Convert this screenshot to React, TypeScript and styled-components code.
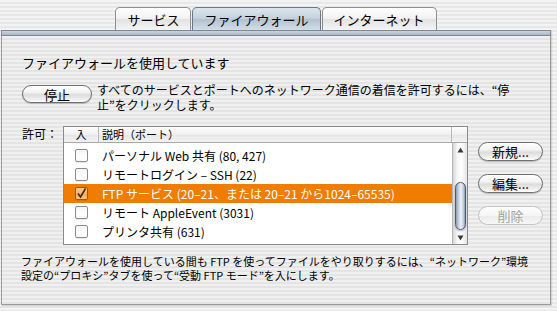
import React from 'react';
import styled, { createGlobalStyle, css } from 'styled-components';

const stripes = (a: string, b: string) =>
  `repeating-linear-gradient(to bottom, ${a} 0px, ${a} 2px, ${b} 2px, ${b} 4px)`;

const Global = createGlobalStyle`
  html, body { margin: 0; padding: 0; }
  body {
    width: 557px;
    height: 311px;
    overflow: hidden;
    background: ${stripes('#f3f3f3', '#e7e7e7')};
    font-family: "Noto Sans CJK JP", "Noto Sans", sans-serif;
    color: #000;
  }
`;

const Window = styled.div`
  padding: 7px 6px 0 1px;
  display: flex;
  flex-direction: column;
`;

const TabBar = styled.div`
  display: flex;
  justify-content: center;
  gap: 1px;
  height: 23px;
`;

const Tab = styled.div<{ $active?: boolean }>`
  height: 22px;
  padding: 0 11px;
  display: flex;
  align-items: center;
  font-size: 13px;
  border: 1px solid #8e8e8e;
  border-bottom: none;
  border-radius: 5px 5px 0 0;
  background: linear-gradient(to bottom, #fefefe 0%, #f1f1f1 48%, #e2e2e2 52%, #f4f4f4 100%);
  ${(p) =>
    p.$active &&
    css`
      border-color: #6c7886;
      background: linear-gradient(to bottom, #dde5ec 0%, #c3d0dc 48%, #b3c2d1 52%, #d2dce6 100%);
    `}
`;

const Panel = styled.div`
  display: flex;
  flex-direction: column;
  height: 275px;
  box-shadow: 1px 1px 1px rgba(0, 0, 0, 0.12);
`;

const PanelHead = styled.div`
  height: 4px;
  border: 1px solid #7d8997;
  background: linear-gradient(to bottom, #c9d3dd, #aab7c5);
`;

const PanelBody = styled.div`
  flex: 1;
  border: 1px solid #9b9b9b;
  border-top: none;
  background: ${stripes('#f0f0f0', '#e4e4e4')};
  padding: 19px 0 0 20px;
  display: flex;
  flex-direction: column;
`;

const Title = styled.div`
  font-size: 13px;
  line-height: 16px;
`;

const StopRow = styled.div`
  display: flex;
  align-items: flex-start;
  gap: 5px;
  margin-top: 14px;
`;

const AquaButton = styled.div<{ $w: number; $disabled?: boolean }>`
  width: ${(p) => p.$w}px;
  height: 18px;
  box-sizing: border-box;
  border: 1px solid #707070;
  border-radius: 10px;
  display: flex;
  align-items: center;
  justify-content: center;
  font-size: 13px;
  background: linear-gradient(to bottom, #ffffff 0%, #f3f3f3 40%, #dcdcdc 55%, #f0f0f0 85%, #ffffff 100%);
  box-shadow: 0 1px 1px rgba(0, 0, 0, 0.22);
  flex: none;
  ${(p) =>
    p.$disabled &&
    css`
      border-color: #c2c2c2;
      color: #a2a2a2;
      box-shadow: none;
      background: linear-gradient(to bottom, #fcfcfc 0%, #f6f6f6 50%, #ececec 55%, #f7f7f7 100%);
    `}
`;

const Description = styled.div`
  font-size: 12px;
  line-height: 15px;
  margin-top: -3px;
`;

const AllowRow = styled.div`
  display: flex;
  align-items: flex-start;
  margin-top: 14px;
`;

const AllowLabel = styled.div`
  font-size: 12px;
  line-height: 16px;
  width: 41px;
  white-space: nowrap;
  flex: none;
`;

const Table = styled.div`
  width: 405px;
  height: 119px;
  box-sizing: border-box;
  border: 1px solid #8a8a8a;
  background: #fff;
  display: flex;
  flex-direction: column;
`;

const HeaderRow = styled.div`
  display: flex;
  height: 15px;
  border-bottom: 1px solid #a8a8a8;
  background: linear-gradient(to bottom, #ffffff, #efefef 50%, #e6e6e6 51%, #f2f2f2);
  font-size: 11px;
  line-height: 15px;
`;

const HeadCell = styled.div<{ $w?: number; $center?: boolean }>`
  ${(p) => (p.$w ? `width: ${p.$w}px; flex: none;` : 'flex: 1;')}
  box-sizing: border-box;
  border-right: 1px solid #b8b8b8;
  padding-left: ${(p) => (p.$center ? 0 : 3)}px;
  text-align: ${(p) => (p.$center ? 'center' : 'left')};
  &:last-child { border-right: none; }
`;

const Body = styled.div`
  flex: 1;
  display: flex;
  min-height: 0;
`;

const RowList = styled.div`
  flex: 1;
  padding-top: 3px;
  overflow: hidden;
`;

const Row = styled.div<{ $selected?: boolean }>`
  display: flex;
  align-items: center;
  height: 19px;
  font-size: 12px;
  background: ${(p) => (p.$selected ? '#f07c00' : 'transparent')};
  color: ${(p) => (p.$selected ? '#fff' : '#000')};
`;

const CheckCell = styled.div`
  width: 35px;
  flex: none;
  display: flex;
  justify-content: center;
`;

const Check = styled.div<{ $checked?: boolean }>`
  width: 13px;
  height: 13px;
  box-sizing: border-box;
  border: 1px solid #8c8c8c;
  border-radius: 2px;
  background: linear-gradient(to bottom, #f4f4f4, #ffffff 60%, #fafafa);
  box-shadow: 0 1px 0 rgba(0, 0, 0, 0.08);
  display: flex;
  align-items: center;
  justify-content: center;
  ${(p) =>
    p.$checked &&
    css`
      border-color: #9a5a10;
      background: linear-gradient(to bottom, #f7c98f, #f3b56d 50%, #eea650 51%, #f6c98c);
    `}
`;

const RowText = styled.div`
  padding-left: 3px;
  white-space: nowrap;
`;

const ScrollBar = styled.div`
  width: 14px;
  flex: none;
  border-left: 1px solid #b5b5b5;
  background: linear-gradient(to right, #d6d6d6, #f6f6f6 30%, #ffffff 60%, #e4e4e4);
  display: flex;
  flex-direction: column;
  align-items: center;
`;

const ArrowBox = styled.div`
  height: 13px;
  width: 14px;
  display: flex;
  align-items: center;
  justify-content: center;
  flex: none;
`;

const Track = styled.div`
  flex: 1;
  width: 14px;
  display: flex;
  flex-direction: column;
  align-items: center;
  padding-top: 26px;
`;

const Thumb = styled.div`
  width: 11px;
  height: 48px;
  box-sizing: border-box;
  border: 1px solid #4d5b6c;
  border-radius: 6px;
  background: linear-gradient(to right, #8d9cae, #c8d3df 30%, #eef2f6 55%, #b9c6d4 85%, #8596aa);
  box-shadow: 0 1px 2px rgba(0, 0, 0, 0.3);
`;

const SideButtons = styled.div`
  display: flex;
  flex-direction: column;
  gap: 13px;
  margin-left: 10px;
  padding-top: 16px;
`;

const SideButton = styled(AquaButton)`
  height: 19px;
  font-size: 13px;
`;

const Footer = styled.div`
  font-size: 11px;
  line-height: 14px;
  margin-top: 9px;
  margin-left: -1px;
`;

const Arrow = ({ up }: { up?: boolean }) => (
  <svg width="7" height="6" viewBox="0 0 7 6">
    <path d={up ? 'M3.5 0.5 L6.5 5.5 L0.5 5.5 Z' : 'M0.5 0.5 L6.5 0.5 L3.5 5.5 Z'} fill="#3b3b3b" />
  </svg>
);

const CheckMark = () => (
  <svg width="11" height="11" viewBox="0 0 11 11">
    <path d="M2 5.5 L4.5 9 L9.5 0.5" stroke="#4a2a08" strokeWidth="1.6" fill="none" />
  </svg>
);

const rows = [
  { text: 'パーソナル Web 共有 (80, 427)' },
  { text: 'リモートログイン – SSH (22)' },
  { text: 'FTP サービス (20–21、または 20–21 から1024–65535)', checked: true, selected: true },
  { text: 'リモート AppleEvent (3031)' },
  { text: 'プリンタ共有 (631)' },
];

export default function App() {
  return (
    <>
      <Global />
      <Window>
        <TabBar>
          <Tab>サービス</Tab>
          <Tab $active>ファイアウォール</Tab>
          <Tab>インターネット</Tab>
        </TabBar>
        <Panel>
          <PanelHead />
          <PanelBody>
            <Title>ファイアウォールを使用しています</Title>
            <StopRow>
              <AquaButton $w={70}>停止</AquaButton>
              <Description>
                すべてのサービスとポートへのネットワーク通信の着信を許可するには、“停
                <br />
                止”をクリックします。
              </Description>
            </StopRow>
            <AllowRow>
              <AllowLabel>許可：</AllowLabel>
              <Table>
                <HeaderRow>
                  <HeadCell $w={35} $center>入</HeadCell>
                  <HeadCell>説明（ポート）</HeadCell>
                  <HeadCell $w={15} />
                </HeaderRow>
                <Body>
                  <RowList>
                    {rows.map((r) => (
                      <Row key={r.text} $selected={r.selected}>
                        <CheckCell>
                          <Check $checked={r.checked}>{r.checked && <CheckMark />}</Check>
                        </CheckCell>
                        <RowText>{r.text}</RowText>
                      </Row>
                    ))}
                  </RowList>
                  <ScrollBar>
                    <ArrowBox>
                      <Arrow up />
                    </ArrowBox>
                    <Track>
                      <Thumb />
                    </Track>
                    <ArrowBox>
                      <Arrow />
                    </ArrowBox>
                  </ScrollBar>
                </Body>
              </Table>
              <SideButtons>
                <SideButton $w={65}>新規...</SideButton>
                <SideButton $w={65}>編集...</SideButton>
                <SideButton $w={65} $disabled>削除</SideButton>
              </SideButtons>
            </AllowRow>
            <Footer>
              ファイアウォールを使用している間も FTP を使ってファイルをやり取りするには、“ネットワーク”環境
              <br />
              設定の“プロキシ”タブを使って“受動 FTP モード”を入にします。
            </Footer>
          </PanelBody>
        </Panel>
      </Window>
    </>
  );
}
